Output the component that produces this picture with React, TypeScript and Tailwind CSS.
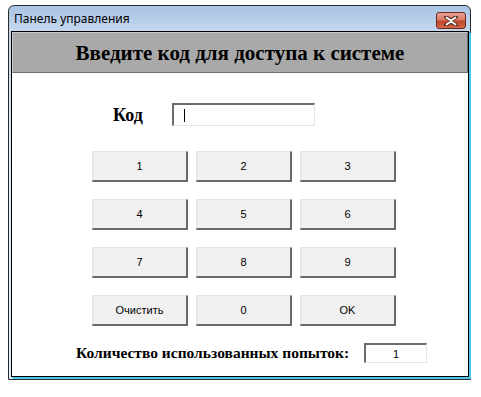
import React from "react"

const KEYS = ["1", "2", "3", "4", "5", "6", "7", "8", "9", "Очистить", "0", "OK"]

function CloseIcon() {
  return (
    <svg width="14" height="10" viewBox="0 0 14 10">
      <path
        d="M2 1 L7 4.2 L12 1 M2 9 L7 5.8 L12 9"
        stroke="#4a1d16"
        strokeWidth="3.6"
        strokeLinecap="round"
        fill="none"
      />
      <path
        d="M2.5 1.5 L7 4.6 L11.5 1.5 M2.5 8.5 L7 5.4 L11.5 8.5"
        stroke="#ffffff"
        strokeWidth="2"
        strokeLinecap="round"
        fill="none"
      />
    </svg>
  )
}

function KeyButton({ label }: { label: string }) {
  return (
    <button className="h-[31px] w-[96px] bg-[#f0f0f0] border-t border-l border-t-[#e3e3e3] border-l-[#e3e3e3] border-r-2 border-b-2 border-r-[#696969] border-b-[#696969] text-[11px] text-black font-['Liberation_Sans',Arial,sans-serif] pt-[1px]">
      {label}
    </button>
  )
}

export default function App() {
  return (
    <div className="w-[481px] h-[397px] bg-white overflow-hidden pt-[5px] pl-[8px]">
      {/* window frame */}
      <div className="w-[463px] h-[375px] rounded-t-[6px] border border-[#2b2b2b] bg-[linear-gradient(180deg,#a9c4e4_0px,#c4d7ee_25px,#dce8f5_120px,#e4eef8_100%)] flex flex-col">
        {/* title bar */}
        <div className="h-[25px] flex items-center justify-between pl-[5px] pr-[4px]">
          <span className="text-[12px] text-black font-['Noto_Sans','Open_Sans',sans-serif] leading-none mt-[1px]">
            Панель управления
          </span>
          <div className="w-[30px] h-[17px] mt-[4px] rounded-[3px] border border-[#6e2a20] bg-[linear-gradient(180deg,#e9a293_0%,#d87a62_45%,#c0452d_55%,#d26a4c_100%)] flex items-center justify-center">
            <CloseIcon />
          </div>
        </div>

        {/* client area */}
        <div className="ml-[2px] w-[458px] h-[346px] border border-black bg-white flex flex-col shadow-[1px_1px_0_#4fc6e6,2px_2px_0_#4fc6e6]">
          <div className="h-[41px] bg-[#a9a9a9] border-t border-l border-t-[#c8c8c8] border-l-[#c8c8c8] border-b border-r border-b-[#6f6f6f] border-r-[#6f6f6f] flex items-center justify-center">
            <span className="text-[21px] font-bold text-black font-['Liberation_Serif','Times_New_Roman',serif] leading-none mt-[2px]">
              Введите код для доступа к системе
            </span>
          </div>

          <div className="mt-[30px] pl-[101px] flex items-center h-[23px]">
            <span className="w-[59px] text-[18px] font-bold text-black font-['Liberation_Serif','Times_New_Roman',serif] leading-none">
              Код
            </span>
            <div className="w-[143px] h-[23px] bg-white border-t-2 border-l-2 border-t-[#6d6d6d] border-l-[#6d6d6d] border-b border-r border-b-[#e3e3e3] border-r-[#e3e3e3] flex items-center pl-[10px]">
              <div className="w-px h-[13px] bg-black" />
            </div>
          </div>

          <div className="mt-[25px] pl-[80px] grid grid-cols-[96px_96px_96px] gap-x-[8px] gap-y-[17px]">
            {KEYS.map((k) => (
              <KeyButton key={k} label={k} />
            ))}
          </div>

          <div className="mt-[17px] pl-[64px] flex items-center">
            <span className="w-[288px] text-[15.5px] font-bold text-black font-['Liberation_Serif','Times_New_Roman',serif] leading-none">
              Количество использованных попыток:
            </span>
            <div className="w-[63px] h-[20px] bg-white border-t-2 border-l-2 border-t-[#6d6d6d] border-l-[#6d6d6d] border-b border-r border-b-[#e3e3e3] border-r-[#e3e3e3] flex items-center justify-center text-[11px] text-black font-['Liberation_Sans',Arial,sans-serif] pt-[1px]">
              1
            </div>
          </div>
        </div>
      </div>
    </div>
  )
}
